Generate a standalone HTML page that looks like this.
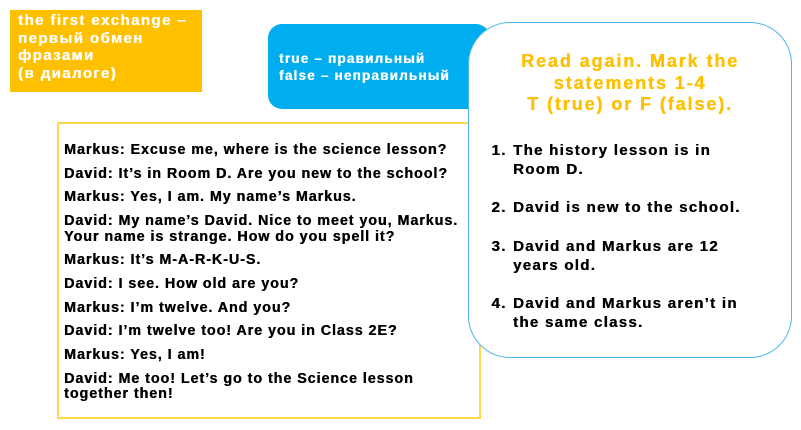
<!DOCTYPE html>
<html><head><meta charset="utf-8"><style>
body{margin:0;width:801px;height:430px;background:#fff;position:relative;overflow:hidden;font-family:"Liberation Sans",Arial,sans-serif;font-weight:bold}
.o{position:absolute;left:10px;top:10px;width:192px;height:82px;background:#FFC000;color:#fff;font-size:15px;letter-spacing:1.4px;line-height:17.5px;padding:2px 0 0 8px;box-sizing:border-box;text-shadow:0.4px 0 #fff}
.b{position:absolute;left:268px;top:24px;width:222px;height:85px;background:#00AEEF;border-radius:14px;color:#fff;font-size:13.5px;letter-spacing:1.2px;line-height:17px;padding:26px 0 0 11px;box-sizing:border-box;text-shadow:0.4px 0 #fff}
.d{position:absolute;left:57px;top:122px;width:424px;height:297px;border:2px solid #FFD84D;box-sizing:border-box;padding:19px 0 0 5px;font-size:14.3px;letter-spacing:0.95px;color:#000;text-shadow:0.4px 0 #000}
.d p{margin:0 0 8.2px;line-height:15.5px;white-space:nowrap}
.w{position:absolute;left:468px;top:22px;width:324px;height:336px;background:#fff;border:1.5px solid #4DB8E8;border-radius:42px;box-sizing:border-box}
.t{position:absolute;left:0;right:0;top:28px;text-align:center;color:#FFC000;font-size:18px;letter-spacing:1.9px;line-height:21.5px;text-shadow:0.4px 0 #FFC000}
ol{position:absolute;left:20px;top:118px;margin:0;padding:0 0 0 23px;font-size:15px;letter-spacing:1.3px;line-height:19px;color:#000;text-shadow:0.4px 0 #000;white-space:nowrap}
ol li{margin-bottom:19.3px;padding-left:1px}
</style></head><body>
<div class="o">the first exchange –<br>первый обмен<br>фразами<br>(в диалоге)</div>
<div class="b">true – правильный<br>false – неправильный</div>
<div class="d">
<p>Markus: Excuse me, where is the science lesson?</p>
<p>David: It’s in Room D. Are you new to the school?</p>
<p>Markus: Yes, I am. My name’s Markus.</p>
<p>David: My name’s David. Nice to meet you, Markus.<br>Your name is strange. How do you spell it?</p>
<p>Markus: It’s M-A-R-K-U-S.</p>
<p>David: I see. How old are you?</p>
<p>Markus: I’m twelve. And you?</p>
<p>David: I’m twelve too! Are you in Class 2E?</p>
<p>Markus: Yes, I am!</p>
<p>David: Me too! Let’s go to the Science lesson<br>together then!</p>
</div>
<div class="w">
<div class="t">Read again. Mark the<br>statements 1-4<br>T (true) or F (false).</div>
<ol>
<li>The history lesson is in<br>Room D.</li>
<li>David is new to the school.</li>
<li>David and Markus are 12<br>years old.</li>
<li>David and Markus aren’t in<br>the same class.</li>
</ol>
</div>
</body></html>
